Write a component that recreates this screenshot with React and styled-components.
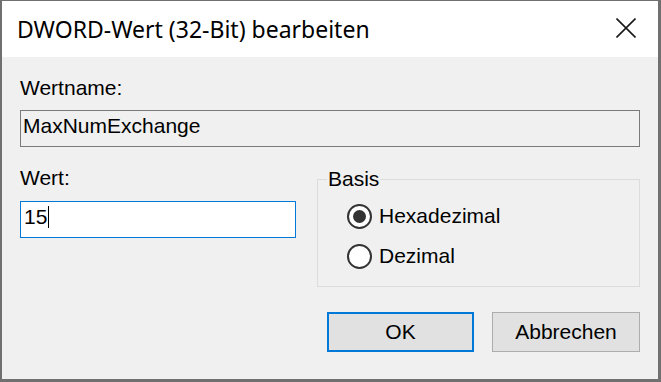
import styled, { createGlobalStyle } from 'styled-components';

const GlobalStyle = createGlobalStyle`
  html, body {
    margin: 0;
    padding: 0;
    background: #ffffff;
  }
  body {
    font-family: "Liberation Sans", Arial, sans-serif;
    color: #000000;
  }
`;

const Window = styled.div`
  width: 661px;
  height: 382px;
  box-sizing: border-box;
  border-style: solid;
  border-color: #707070;
  border-width: 1px 3px 3px 2px;
  background: #f0f0f0;
  display: flex;
  flex-direction: column;
`;

const TitleBar = styled.div`
  height: 56px;
  flex: none;
  background: #ffffff;
  display: flex;
  align-items: center;
  justify-content: space-between;
  padding: 0 22px 0 15px;
`;

const Title = styled.span`
  font-family: "Noto Sans", "Open Sans", sans-serif;
  font-size: 23px;
  color: #000000;
`;

const CloseButton = styled.div`
  width: 20px;
  height: 20px;
  margin-top: -2px;
  display: flex;
  align-items: center;
  justify-content: center;
`;

const Content = styled.div`
  flex: 1;
  padding: 19px 18px 0 18px;
  display: flex;
  flex-direction: column;
`;

const Label = styled.div`
  font-size: 21px;
  line-height: 24px;
`;

const Field = styled.div`
  height: 37px;
  box-sizing: border-box;
  margin-top: ${(p) => p.$gap}px;
  border: 1px solid ${(p) => (p.$focused ? '#0078d7' : '#7a7a7a')};
  background: ${(p) => (p.$focused ? '#ffffff' : '#f0f0f0')};
  padding: 3px 0 0 ${(p) => (p.$focused ? 3 : 2)}px;
  font-size: 21px;
  line-height: 24px;
  display: flex;
  align-items: flex-start;
`;

const Caret = styled.span`
  width: 1px;
  height: 22px;
  margin: 1px 0 0 1px;
  background: #000000;
`;

const Row = styled.div`
  margin-top: 19px;
  display: grid;
  grid-template-columns: 276px 1fr;
  column-gap: 21px;
  align-items: start;
`;

const Column = styled.div`
  display: flex;
  flex-direction: column;
`;

const Group = styled.fieldset`
  margin: 2px 0 0 0;
  padding: 0 0 10px 9px;
  min-width: 0;
  border: 1px solid #dcdcdc;
`;

const Legend = styled.legend`
  padding: 0 1px;
  font-size: 21px;
  line-height: 22px;
`;

const RadioList = styled.div`
  margin-top: 6px;
  padding-left: 20px;
  display: flex;
  flex-direction: column;
`;

const RadioRow = styled.label`
  height: 40px;
  display: flex;
  align-items: center;
  gap: 7px;
  font-size: 21px;
  line-height: 24px;
`;

const RadioCircle = styled.span`
  width: 25px;
  height: 25px;
  box-sizing: border-box;
  border: 2px solid #333333;
  border-radius: 50%;
  background: #ffffff;
  display: flex;
  align-items: center;
  justify-content: center;

  &::after {
    content: '';
    width: 13px;
    height: 13px;
    border-radius: 50%;
    background: ${(p) => (p.$checked ? '#333333' : 'transparent')};
  }
`;

const ButtonRow = styled.div`
  margin-top: 25px;
  display: flex;
  justify-content: flex-end;
  gap: 18px;
`;

const Button = styled.button`
  width: ${(p) => p.$w}px;
  height: 40px;
  box-sizing: border-box;
  background: #e1e1e1;
  border: ${(p) => (p.$default ? '2px solid #0078d7' : '1px solid #adadad')};
  font-family: "Liberation Sans", Arial, sans-serif;
  font-size: 21px;
  color: #000000;
  padding: 0;
`;

function CloseIcon() {
  return (
    <svg width="20" height="20" viewBox="0 0 20 20">
      <path d="M0.5 0.5 L19.5 19.5 M19.5 0.5 L0.5 19.5" stroke="#1a1a1a" strokeWidth="1.6" fill="none" />
    </svg>
  );
}

export default function App() {
  return (
    <>
      <GlobalStyle />
      <Window>
        <TitleBar>
          <Title>DWORD-Wert (32-Bit) bearbeiten</Title>
          <CloseButton>
            <CloseIcon />
          </CloseButton>
        </TitleBar>
        <Content>
          <Label>Wertname:</Label>
          <Field $gap={10}>MaxNumExchange</Field>
          <Row>
            <Column>
              <Label>Wert:</Label>
              <Field $gap={11} $focused>
                15
                <Caret />
              </Field>
            </Column>
            <Group>
              <Legend>Basis</Legend>
              <RadioList>
                <RadioRow>
                  <RadioCircle $checked />
                  Hexadezimal
                </RadioRow>
                <RadioRow>
                  <RadioCircle />
                  Dezimal
                </RadioRow>
              </RadioList>
            </Group>
          </Row>
          <ButtonRow>
            <Button $w={147} $default>OK</Button>
            <Button $w={148}>Abbrechen</Button>
          </ButtonRow>
        </Content>
      </Window>
    </>
  );
}
